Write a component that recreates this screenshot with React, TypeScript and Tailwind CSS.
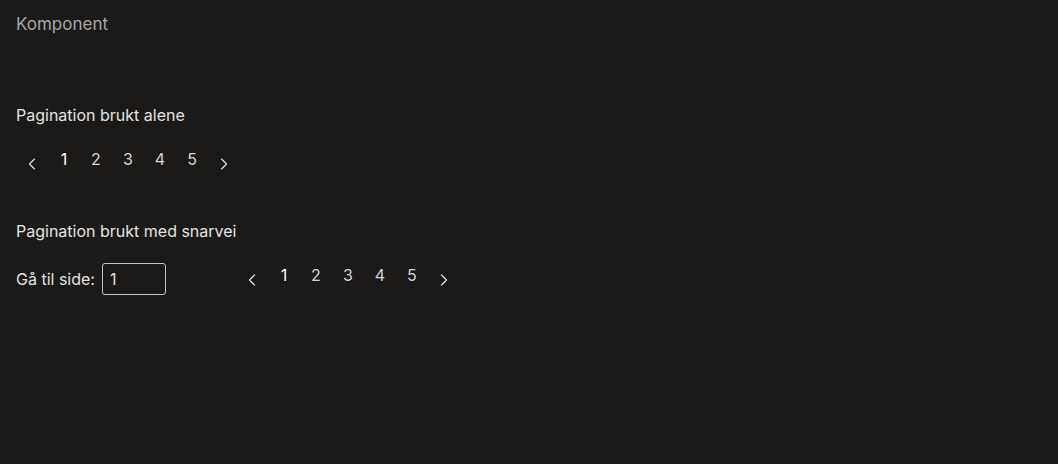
import { ChevronLeft, ChevronRight } from "lucide-react";

const pages = [1, 2, 3, 4, 5];

const Pagination = ({ current = 1 }: { current?: number }) => {
    return (
        <nav className="flex items-center">
            <button className="w-8 h-8 flex items-center justify-center text-[#e4e4e4]">
                <ChevronLeft size={20} strokeWidth={1.4} className="translate-y-[5px]" />
            </button>
            {pages.map((p) => (
                <button
                    key={p}
                    className={
                        p === current
                            ? "w-8 h-8 flex items-center justify-center text-white"
                            : "w-8 h-8 flex items-center justify-center text-[#d4d4d4]"
                    }
                >
                    {p}
                </button>
            ))}
            <button className="w-8 h-8 flex items-center justify-center text-[#e4e4e4]">
                <ChevronRight size={20} strokeWidth={1.4} className="translate-y-[5px]" />
            </button>
        </nav>
    );
};

export default function App() {
    return (
        <main
            className="min-h-screen w-full bg-[#1b1a19] px-4 pt-3 text-[16px] text-[#e2e2e2]"
            style={{ fontFamily: "Inter, 'Liberation Sans', sans-serif" }}
        >
            <p className="leading-6 text-[17px] text-[#a6a6a6]">Komponent</p>

            <section className="mt-[67px]">
                <h2 className="leading-6">Pagination brukt alene</h2>
                <div className="mt-[16px]">
                    <Pagination />
                </div>
            </section>

            <section className="mt-[44px]">
                <h2 className="leading-6">Pagination brukt med snarvei</h2>
                <div className="mt-[20px] flex items-start">
                    <label className="flex items-center gap-[7px]">
                        <span>Gå til side:</span>
                        <input
                            defaultValue="1"
                            className="w-16 h-8 rounded-[3px] border border-[#c4c4c4] bg-transparent px-[7px] text-[#e2e2e2] outline-none"
                        />
                    </label>
                    <div className="ml-[70px] -mt-[4px]">
                        <Pagination />
                    </div>
                </div>
            </section>
        </main>
    );
}
